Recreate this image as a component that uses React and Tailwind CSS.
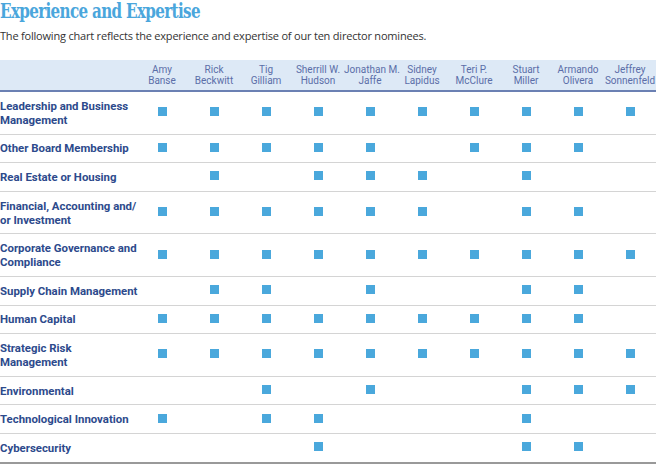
const nominees = [
  ["Amy", "Banse"],
  ["Rick", "Beckwitt"],
  ["Tig", "Gilliam"],
  ["Sherrill W.", "Hudson"],
  ["Jonathan M.", "Jaffe"],
  ["Sidney", "Lapidus"],
  ["Teri P.", "McClure"],
  ["Stuart", "Miller"],
  ["Armando", "Olivera"],
  ["Jeffrey", "Sonnenfeld"],
]

// 1 = nominee has the skill
const skills = [
  { label: ["Leadership and Business", "Management"], marks: [1, 1, 1, 1, 1, 1, 1, 1, 1, 1] },
  { label: ["Other Board Membership"], marks: [1, 1, 1, 1, 1, 0, 1, 1, 1, 0] },
  { label: ["Real Estate or Housing"], marks: [0, 1, 0, 1, 1, 1, 0, 1, 0, 0] },
  { label: ["Financial, Accounting and/", "or Investment"], marks: [1, 1, 1, 1, 1, 1, 0, 1, 1, 0] },
  { label: ["Corporate Governance and", "Compliance"], marks: [1, 1, 1, 1, 1, 1, 1, 1, 1, 1] },
  { label: ["Supply Chain Management"], marks: [0, 1, 1, 0, 1, 0, 0, 1, 1, 0] },
  { label: ["Human Capital"], marks: [1, 1, 1, 1, 1, 1, 1, 1, 1, 0] },
  { label: ["Strategic Risk", "Management"], marks: [1, 1, 1, 1, 1, 1, 1, 1, 1, 1] },
  { label: ["Environmental"], marks: [0, 0, 1, 0, 1, 0, 0, 1, 1, 1] },
  { label: ["Technological Innovation"], marks: [1, 0, 1, 1, 0, 0, 0, 1, 0, 0] },
  { label: ["Cybersecurity"], marks: [0, 0, 0, 1, 0, 0, 0, 1, 1, 0] },
]

const cols = "grid grid-cols-[136px_repeat(10,52px)]"

function App() {
  return (
    <div className="w-[656px] h-[464px] bg-white overflow-hidden font-['Open_Sans',sans-serif]">
      <h1 className="w-fit font-['DejaVu_Serif_Condensed','DejaVu_Serif',serif] font-bold text-[21px] leading-[22px] text-[#4aa6dc] tracking-[-0.8px] whitespace-nowrap origin-left scale-x-[0.8]">
        Experience and Expertise
      </h1>
      <p className="mt-[7px] text-[11px] leading-[14px] text-[#333] tracking-[-0.2px]">
        The following chart reflects the experience and expertise of our ten director nominees.
      </p>

      <div className={`${cols} mt-[17px] h-[32px] bg-[#dde9f6] border-b-2 border-[#6b80b3] items-center font-['Liberation_Sans_Narrow','Roboto',sans-serif]`}>
        <div />
        {nominees.map(([first, last]) => (
          <div key={last} className="text-center text-[10px] leading-[11px] text-[#5b6ea8] whitespace-nowrap">
            <div>{first}</div>
            <div>{last}</div>
          </div>
        ))}
      </div>

      {skills.map((s, i) => (
        <div
          key={i}
          className={`${cols} items-center border-b ${i === skills.length - 1 ? "border-b-2 border-[#999]" : "border-[#d4d4d4]"}`}
        >
          <div className="py-[6.8px] text-[11.4px] leading-[14px] font-bold text-[#2d4a8c] whitespace-nowrap font-['Liberation_Sans_Narrow','Roboto',sans-serif]">
            {s.label.map((l) => (
              <div key={l}>{l}</div>
            ))}
          </div>
          {s.marks.map((m, j) => (
            <div key={j} className="flex justify-center">
              {m ? <span className="w-[9px] h-[9px] bg-[#4aa8dc] -mt-[2px]" /> : null}
            </div>
          ))}
        </div>
      ))}
    </div>
  )
}

export default App
